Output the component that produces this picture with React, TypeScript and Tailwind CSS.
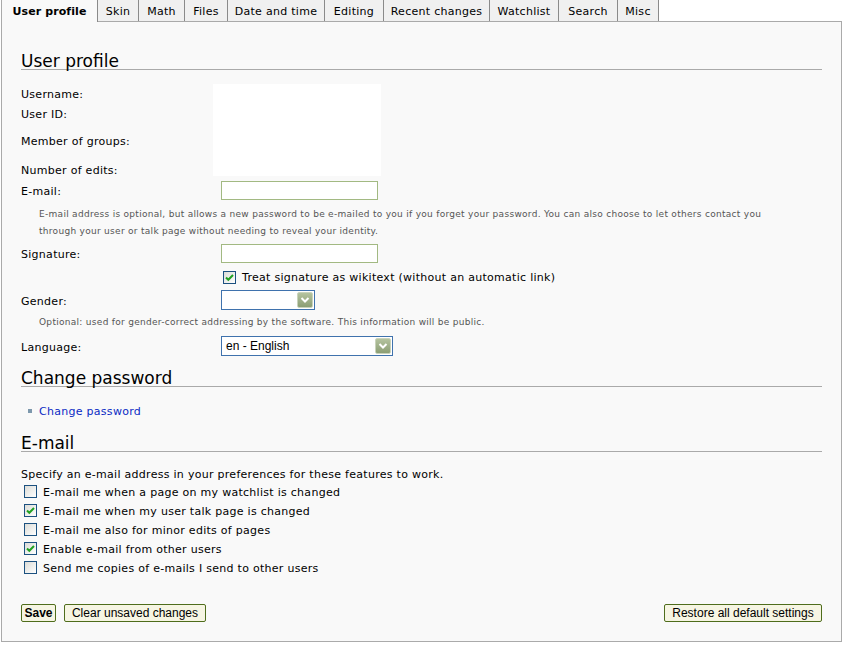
import React from "react";

const tabs = [
  { label: "User profile", w: 97, active: true },
  { label: "Skin", w: 41 },
  { label: "Math", w: 46 },
  { label: "Files", w: 43 },
  { label: "Date and time", w: 97 },
  { label: "Editing", w: 59 },
  { label: "Recent changes", w: 106 },
  { label: "Watchlist", w: 69 },
  { label: "Search", w: 59 },
  { label: "Misc", w: 41 },
];

const emailOptions = [
  { label: "E-mail me when a page on my watchlist is changed", checked: false },
  { label: "E-mail me when my user talk page is changed", checked: true },
  { label: "E-mail me also for minor edits of pages", checked: false },
  { label: "Enable e-mail from other users", checked: true },
  { label: "Send me copies of e-mails I send to other users", checked: false },
];

function CheckBox({ checked }: { checked: boolean }) {
  return (
    <span className="flex h-[13px] w-[13px] shrink-0 items-center justify-center border border-[#1c5180] bg-gradient-to-br from-[#dcdcd7] to-white">
      {checked && (
        <svg width="11" height="11" viewBox="0 0 11 11">
          <path d="M2 5.5 L4.3 7.8 L9 3" fill="none" stroke="#21a121" strokeWidth="2" />
        </svg>
      )}
    </span>
  );
}

function TextBox({ width }: { width: string }) {
  return <div className={`h-[19px] border border-[#a2b982] bg-white ${width}`} />;
}

function DropArrow() {
  return (
    <span className="flex h-[16px] w-[16px] items-center justify-center rounded-[2px] border border-[#c9d3bb] bg-gradient-to-b from-[#b4c39f] to-[#8c9e74]">
      <svg width="10" height="8" viewBox="0 0 10 8">
        <path d="M1.5 2 L5 5.5 L8.5 2" fill="none" stroke="#ffffff" strokeWidth="2" />
      </svg>
    </span>
  );
}

function Select({ width, value }: { width: string; value?: string }) {
  return (
    <div className={`flex h-[20px] items-center justify-between border border-[#3f72ad] bg-white pl-[4px] pr-[1px] ${width}`}>
      <span className="font-['Liberation_Sans',Arial,sans-serif] text-[12px] leading-none tracking-normal text-black">{value}</span>
      <DropArrow />
    </div>
  );
}

function Heading({ children, className = "" }: { children: React.ReactNode; className?: string }) {
  return (
    <h2 className={`h-[21px] border-b border-[#aaa] text-[17px] leading-[24px] font-normal tracking-normal text-black ${className}`}>
      {children}
    </h2>
  );
}

function Label({ children, width = "" }: { children: React.ReactNode; width?: string }) {
  return <span className={`pt-[4px] ${width}`}>{children}</span>;
}

function Button({ children, width, bold }: { children: React.ReactNode; width: string; bold?: boolean }) {
  return (
    <button
      className={`flex h-[18px] items-center justify-center rounded-[2px] border border-[#4f6d1c] bg-[#f6f5e3] font-['Liberation_Sans',Arial,sans-serif] text-[12px] leading-none tracking-normal text-black ${width} ${bold ? "font-bold" : ""}`}
    >
      {children}
    </button>
  );
}

export default function App() {
  return (
    <div className="min-h-[646px] bg-white px-[1px] font-['DejaVu_Sans',Verdana,sans-serif] text-[11px] tracking-[0.28px] text-black">
      {/* preference tabs */}
      <div className="flex h-[21px] items-start">
        {tabs.map((t) => (
          <div
            key={t.label}
            style={{ width: t.w }}
            className={
              t.active
                ? "relative z-10 flex h-[22px] items-center justify-center border-l border-r border-l-[#aaa] border-r-[#8a8a8a] bg-[#f9f9f9] pt-[3px] font-bold tracking-[0.1px]"
                : "flex h-[21px] items-center justify-center border-r border-[#8a8a8a] bg-[#f0f0f0] pt-[4px]"
            }
          >
            {t.label}
          </div>
        ))}
      </div>

      {/* preference panel */}
      <div className="border border-[#aaa] bg-[#f9f9f9] px-[19px] pt-[27px] pb-[19px]">
        <Heading>User profile</Heading>

        <div className="mt-[13px] grid grid-cols-[192px_1fr] grid-rows-[20px_20px_35px_23px]">
          <div className="col-start-1 row-start-1 flex items-center"><Label>Username:</Label></div>
          <div className="col-start-1 row-start-2 flex items-center"><Label>User ID:</Label></div>
          <div className="col-start-1 row-start-3 flex items-center"><Label>Member of groups:</Label></div>
          <div className="col-start-1 row-start-4 flex items-center"><Label>Number of edits:</Label></div>
          <div className="col-start-2 row-span-4 row-start-1 mt-[1px] h-[92px] w-[168px] bg-white" />
        </div>

        <div className="flex h-[19px] items-center">
          <Label width="w-[200px]">E-mail:</Label>
          <TextBox width="w-[157px]" />
        </div>
        <p className="mt-[6px] ml-[18px] text-[9px] leading-[17px] tracking-[0.29px] text-[#555]">
          E-mail address is optional, but allows a new password to be e-mailed to you if you forget your password. You can also choose to let others contact you
          <br />
          through your user or talk page without needing to reveal your identity.
        </p>

        <div className="mt-[4px] flex h-[19px] items-center">
          <Label width="w-[200px]">Signature:</Label>
          <TextBox width="w-[157px]" />
        </div>
        <div className="mt-[5px] ml-[202px] flex h-[18px] items-center gap-[6px]">
          <CheckBox checked />
          <span className="pt-[3px]">Treat signature as wikitext (without an automatic link)</span>
        </div>

        <div className="mt-[4px] flex h-[20px] items-center">
          <Label width="w-[200px]">Gender:</Label>
          <Select width="w-[94px]" />
        </div>
        <p className="mt-[4px] ml-[18px] text-[9px] leading-[17px] tracking-[0.29px] text-[#555]">
          Optional: used for gender-correct addressing by the software. This information will be public.
        </p>

        <div className="mt-[5px] flex h-[20px] items-center">
          <Label width="w-[200px]">Language:</Label>
          <Select width="w-[172px]" value="en - English" />
        </div>

        <Heading className="mt-[10px]">Change password</Heading>
        <div className="mt-[15px] flex h-[18px] items-center">
          <span className="ml-[7px] h-[4px] w-[4px] bg-[#7d98ad]" />
          <a className="ml-[7px] pt-[3px] text-[#0b2bc4]">Change password</a>
        </div>

        <Heading className="mt-[11px]">E-mail</Heading>
        <div className="mt-[12px] flex h-[18px] items-center">
          <Label>Specify an e-mail address in your preferences for these features to work.</Label>
        </div>
        {emailOptions.map((o) => (
          <div key={o.label} className="ml-[3px] flex h-[19px] items-center gap-[6px]">
            <CheckBox checked={o.checked} />
            <span className="pt-[3px]">{o.label}</span>
          </div>
        ))}

        <div className="mt-[27px] flex items-center">
          <Button width="w-[35px]" bold>
            Save
          </Button>
          <div className="ml-[8px]">
            <Button width="w-[142px]">Clear unsaved changes</Button>
          </div>
          <div className="ml-auto">
            <Button width="w-[158px]">Restore all default settings</Button>
          </div>
        </div>
      </div>
    </div>
  );
}
